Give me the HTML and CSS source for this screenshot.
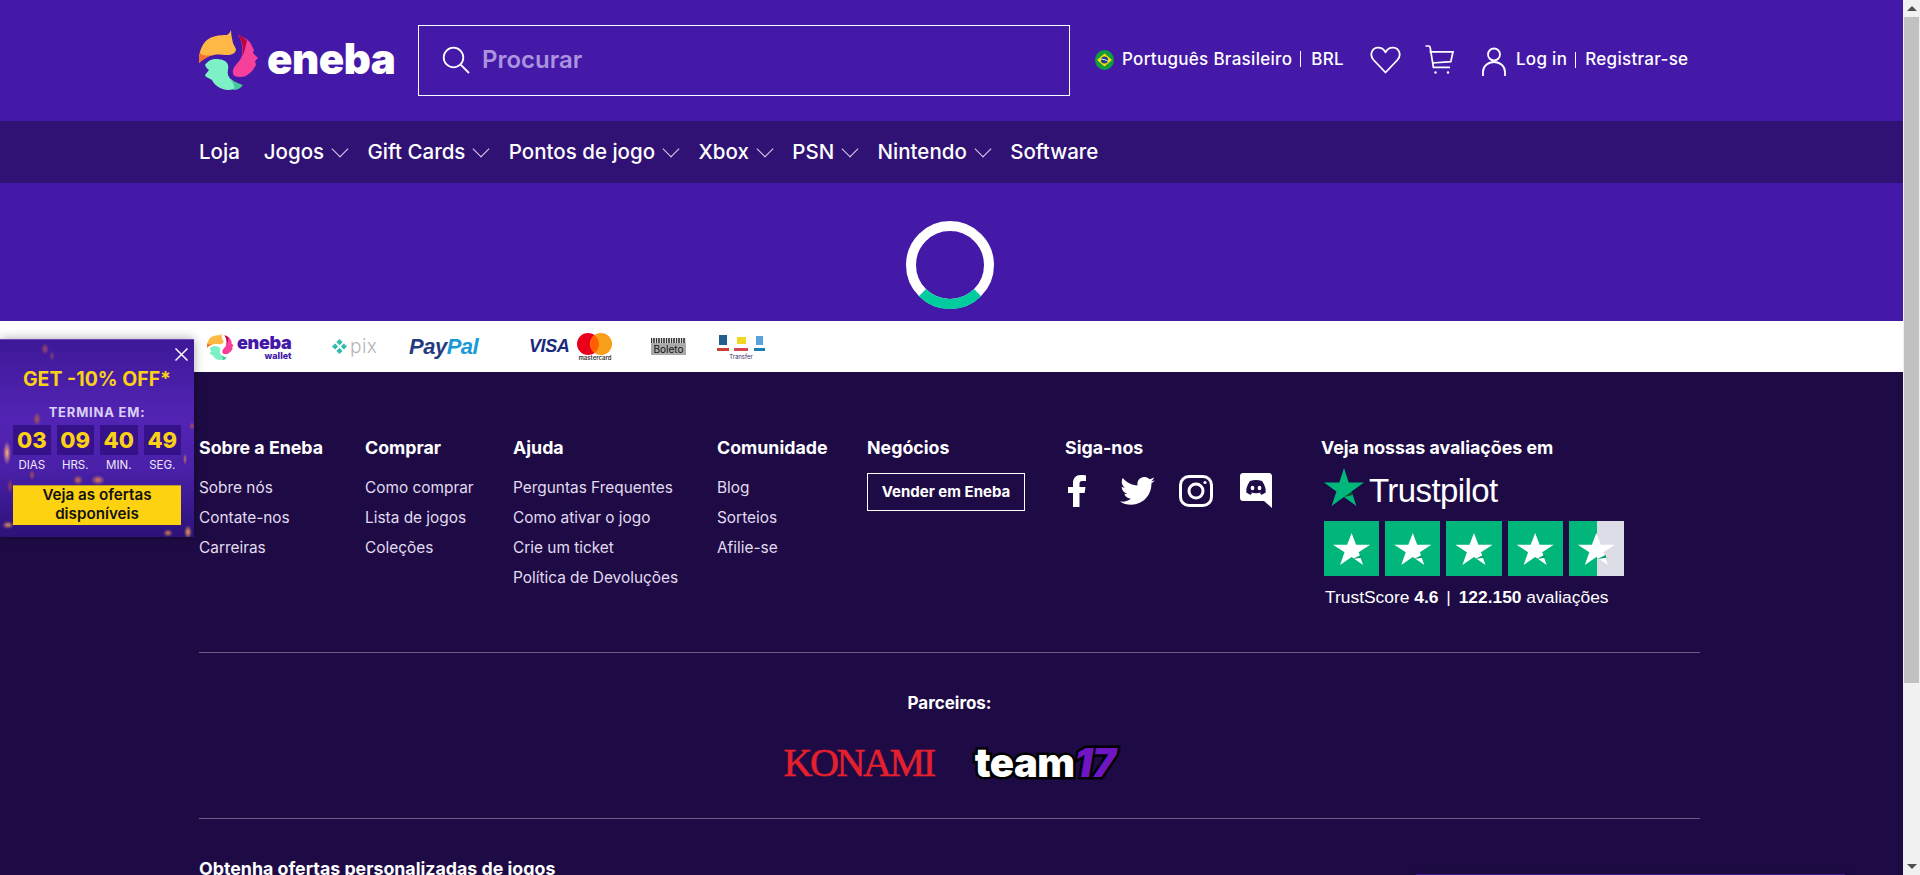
FILE: index.html
```html
<!doctype html>
<html>
  <head>
    <meta charset="utf-8" />
    <title>Eneba</title>
    <link rel="stylesheet" href="styles.css">
  </head>
  <body>
    <svg class="defs" width="0" height="0">
      <symbol id="birds" viewBox="0 0 60 60">
        <path fill="#ffb845" d="M32 0C32 4 33 9 34 13C35 16 37 18 37 20C36 24 32 25 28 25C23 25 19 24 15 25C9 26 4 29 0 33C-1 26 2 15 8 10C13 6 20 5 28 5C30 4 31 2 32 0Z"/>
        <path fill="#f5722e" d="M0 33C-1 30 0 26 1 23C3 26 9 26 15 25C9 26 4 29 0 33Z"/>
        <path fill="#f7409a" d="M39 5C45 7 50 10 52 14L55 20L54 23L59 28L56 31L57 35L54 40C50 44 47 47 42 47C37 47 34 46 34 43C33 38 38 34 41 30C45 24 44 12 39 5Z"/>
        <path fill="#b5063f" d="M39 5C43 6 46 8 48 11C46 17 46 22 43 27C45 20 44 12 39 5Z"/>
        <path fill="#7df0c5" d="M6 35C9 31 12 29 17 29C23 29 28 31 29 35C30 38 28 41 29 45C31 50 36 53 41 55C38 59 33 60 28 60C21 59 15 55 13 50C10 48 6 47 6 45L10 40C8 39 7 37 6 35Z"/>
        <path fill="#43c99a" d="M29 45C31 50 38 53 44 55C41 59 38 60 34 60C38 57 32 50 29 45Z"/>
      </symbol>
    </svg>

    <div class="app">
      <div class="page">
        <header class="topbar">
          <a class="logo">
            <svg class="logo-mark" width="60" height="60"><use href="#birds" /></svg>
            <span class="logo-text">eneba</span>
          </a>
          <div class="search">
            <svg class="search-icon" width="28" height="28" viewBox="0 0 28 28" fill="none" stroke="#fff" stroke-width="1.8">
              <circle cx="11.5" cy="11.5" r="9.8" />
              <path d="M18.6 18.6L27 27" />
            </svg>
            <span class="search-text">Procurar</span>
          </div>
          <div class="locale">
            <svg width="19" height="20" viewBox="0 0 19 20">
              <ellipse cx="9.5" cy="10" rx="9.5" ry="10" fill="#0f9d3e" />
              <path d="M9.5 3.5L17 10L9.5 16.5L2 10Z" fill="#fedd00" />
              <circle cx="9.5" cy="10" r="3.6" fill="#1c3f94" />
              <path d="M6 9.2C8 9 11 9.8 13 11.4" stroke="#fff" fill="none" />
            </svg>
            <span class="locale-name">Português Brasileiro</span>
            <i class="sep"></i>
            <span>BRL</span>
          </div>
          <svg class="icon-heart" width="31" height="28" viewBox="0 0 31 28" fill="none" stroke="#fff" stroke-width="1.8" stroke-linejoin="round">
            <path d="M15.5 26.5L3.6 14C-0.6 9.6 1.4 2 7.6 1.6C11 1.4 14 3.4 15.5 6.4C17 3.4 20 1.4 23.4 1.6C29.6 2 31.6 9.6 27.4 14Z" />
          </svg>
          <svg class="icon-cart" width="29" height="30" viewBox="0 0 29 30" fill="none" stroke="#fff" stroke-width="1.7">
            <path d="M0.5 1H3.5C4.6 1 5 1.6 5.2 2.6L8.4 22.4H25" />
            <path d="M4.6 6.8H28L25.8 16.6L7.2 18" />
            <circle cx="10.5" cy="27.5" r="1.2" fill="#fff" stroke="none" />
            <circle cx="23" cy="27.5" r="1.2" fill="#fff" stroke="none" />
          </svg>
          <svg class="icon-user" width="24" height="29" viewBox="0 0 24 29" fill="none" stroke="#fff" stroke-width="1.8">
            <circle cx="12" cy="7.5" r="6" />
            <path d="M1 29V25C1 19 6 15 12 15C18 15 23 19 23 25V29" />
          </svg>
          <div class="auth">
            <span>Log in</span>
            <i class="sep"></i>
            <span>Registrar-se</span>
          </div>
        </header>

        <nav class="menu">
          <a>Loja</a>
          <a class="has-sub">Jogos</a>
          <a class="has-sub">Gift Cards</a>
          <a class="has-sub">Pontos de jogo</a>
          <a class="has-sub">Xbox</a>
          <a class="has-sub">PSN</a>
          <a class="has-sub">Nintendo</a>
          <a>Software</a>
        </nav>

        <div class="loading">
          <svg width="88" height="88" viewBox="0 0 88 88" fill="none" stroke-width="10">
            <circle cx="44" cy="44" r="39" stroke="#fff" />
            <path d="M16.4 71.6A39 39 0 0 0 71.6 71.6" stroke="#00cc9f" />
          </svg>
        </div>

        <div class="payments">
          <div class="pay pay-wallet">
            <svg width="27" height="27"><use href="#birds" /></svg>
            <div class="wallet-text"><b>eneba</b><small>wallet</small></div>
          </div>
          <div class="pay pay-pix">
            <svg width="15" height="15" viewBox="0 0 15 15" fill="#32bcad">
              <path d="M7.5 0L10.6 3.1L7.5 6.2L4.4 3.1Z" />
              <path d="M3.1 4.4L6.2 7.5L3.1 10.6L0 7.5Z" />
              <path d="M11.9 4.4L15 7.5L11.9 10.6L8.8 7.5Z" />
              <path d="M7.5 8.8L10.6 11.9L7.5 15L4.4 11.9Z" />
            </svg>
            <span>pix</span>
          </div>
          <div class="pay pay-paypal"><b>Pay</b><b>Pal</b></div>
          <div class="pay pay-card">
            <b class="visa">VISA</b>
            <div class="mc">
              <svg width="35" height="22" viewBox="0 0 35 22">
                <circle cx="11" cy="11" r="11" fill="#eb001b" />
                <circle cx="24" cy="11" r="11" fill="#f79e1b" />
                <path d="M17.5 2.2A11 11 0 0 1 17.5 19.8A11 11 0 0 1 17.5 2.2Z" fill="#ff5f00" />
              </svg>
              <small>mastercard</small>
            </div>
          </div>
          <div class="pay pay-boleto"><span>Boleto</span></div>
          <div class="pay pay-transfer">
            <div class="banks">
              <i class="bank-a"></i><i class="bank-b"></i><i class="bank-c"></i>
              <i class="bank-d"></i><i class="bank-e"></i><i class="bank-f"></i>
            </div>
            <small>Transfer</small>
          </div>
        </div>

        <footer class="footer">
          <div class="columns">
            <div class="col">
              <h4>Sobre a Eneba</h4>
              <a>Sobre nós</a>
              <a>Contate-nos</a>
              <a>Carreiras</a>
            </div>
            <div class="col">
              <h4>Comprar</h4>
              <a>Como comprar</a>
              <a>Lista de jogos</a>
              <a>Coleções</a>
            </div>
            <div class="col">
              <h4>Ajuda</h4>
              <a>Perguntas Frequentes</a>
              <a>Como ativar o jogo</a>
              <a>Crie um ticket</a>
              <a>Política de Devoluções</a>
            </div>
            <div class="col">
              <h4>Comunidade</h4>
              <a>Blog</a>
              <a>Sorteios</a>
              <a>Afilie-se</a>
            </div>
            <div class="col">
              <h4>Negócios</h4>
              <a class="sell">Vender em Eneba</a>
            </div>
            <div class="col">
              <h4>Siga-nos</h4>
              <div class="social">
                <svg width="18" height="32" viewBox="0 0 18 32" fill="#fff">
                  <path d="M5 32V18H0V12H5V8C5 3 8 0 12.5 0C15 0 17 .2 18 .4V6H14.5C12 6 11.5 7 11.5 9V12H17.5L16.6 18H11.5V32Z" />
                </svg>
                <svg width="35" height="28" viewBox="0 0 35 28" fill="#fff">
                  <path d="M35 3.3C33.7 3.9 32.3 4.3 30.9 4.5C32.4 3.6 33.5 2.2 34 .5C32.6 1.3 31.1 1.9 29.5 2.2C26.7 -.8 22.1 -.7 19.4 2.1C17.7 3.8 17 6.3 17.5 8.6C11.7 8.3 6.4 5.6 2.7 1.1C.8 4.4 1.8 8.5 4.9 10.6C3.8 10.6 2.7 10.3 1.7 9.7C1.7 13.1 4.1 16 7.4 16.7C6.4 17 5.3 17 4.2 16.8C5.2 19.7 7.8 21.7 10.9 21.8C8.3 23.8 4.9 24.9 1.6 24.6L0 24.5C3.3 26.6 7.1 27.7 11 27.7C24.2 27.7 31.4 16.8 31.4 7.3V6.4C32.8 5.4 34 4.4 35 3.3Z" />
                </svg>
                <svg width="34" height="32" viewBox="0 0 34 32" fill="none" stroke="#fff" stroke-width="3">
                  <rect x="1.5" y="1.5" width="31" height="29" rx="8.5" />
                  <circle cx="17" cy="16" r="7" />
                  <circle cx="26" cy="7.5" r="1.6" fill="#fff" stroke="none" />
                </svg>
                <svg width="32" height="35" viewBox="0 0 32 35">
                  <path fill="#fff" d="M3 0H29C30.7 0 32 1.3 32 3V35L24 28H3C1.3 28 0 26.7 0 25V3C0 1.3 1.3 0 3 0Z" />
                  <path fill="#1e0b45" d="M10 8C12 7.2 14 7 16 7C18 7 20 7.2 22 8C24.5 11.5 26 15 25.7 19.5C24 20.8 22.4 21.4 21 21.7L20 20C20.5 19.8 21 19.5 21.4 19.2C18 20.7 14 20.7 10.6 19.2C11 19.5 11.5 19.8 12 20L11 21.7C9.6 21.4 8 20.8 6.3 19.5C6 15 7.5 11.5 10 8Z" />
                  <ellipse cx="12.5" cy="15" rx="1.9" ry="2.2" fill="#fff" />
                  <ellipse cx="19.5" cy="15" rx="1.9" ry="2.2" fill="#fff" />
                </svg>
              </div>
            </div>
            <div class="col">
              <h4>Veja nossas avaliações em</h4>
              <div class="tp-brand">
                <svg width="40" height="38" viewBox="0 0 40 38">
                  <path fill="#00b67a" d="M20 0L24.7 14.5H40L27.6 23.5L32.4 38L20 29L7.6 38L12.4 23.5L0 14.5H15.3Z" />
                  <path fill="#005128" d="M27.6 23.5L28.7 27L20 29Z" />
                </svg>
                <span>Trustpilot</span>
              </div>
              <div class="tp-stars">
                <i class="tp-star"></i><i class="tp-star"></i><i class="tp-star"></i><i class="tp-star"></i><i class="tp-star half"></i>
              </div>
              <div class="tp-score">TrustScore <b>4.6</b> <em>|</em> <b>122.150</b> avaliações</div>
            </div>
          </div>

          <hr class="rule" />

          <div class="partners">
            <h4>Parceiros:</h4>
            <div class="partner-logos">
              <span class="konami">KONAMI</span>
              <span class="team17">team<b>17</b></span>
            </div>
          </div>

          <hr class="rule" />

          <h4 class="offers">Obtenha ofertas personalizadas de jogos</h4>
        </footer>
      </div>

      <div class="scrollbar">
        <i class="arrow-up"></i>
        <div class="thumb"></div>
        <i class="arrow-down"></i>
      </div>
    </div>

    <aside class="promo">
      <svg class="promo-close" width="13" height="13" viewBox="0 0 13 13" stroke="#fff" stroke-width="1.5">
        <path d="M.5 .5L12.5 12.5M12.5 .5L.5 12.5" />
      </svg>
      <div class="promo-title">GET -10% OFF*</div>
      <div class="promo-ends">TERMINA EM:</div>
      <div class="timer">
        <div class="cell"><b>03</b><span>DIAS</span></div>
        <div class="cell"><b>09</b><span>HRS.</span></div>
        <div class="cell"><b>40</b><span>MIN.</span></div>
        <div class="cell"><b>49</b><span>SEG.</span></div>
      </div>
      <a class="promo-btn">Veja as ofertas disponíveis</a>
    </aside>

    <div class="bottom-edge"></div>
  </body>
</html>
```

FILE: styles.css
```css
* {
  margin: 0;
  padding: 0;
  box-sizing: border-box;
}
html,
body {
  height: 875px;
  overflow: hidden;
  background: #1e0b45;
  color: #fff;
  font-family: Inter, "Noto Sans", sans-serif;
}
.defs {
  position: absolute;
}
.app {
  display: flex;
  height: 875px;
}
.page {
  flex: 1;
  min-width: 0;
  overflow: hidden;
}

/* top bar */
.topbar {
  height: 121px;
  background: #4519a8;
  display: flex;
  align-items: center;
  padding-left: 199px;
}
.logo {
  width: 219px;
  display: flex;
  align-items: center;
  gap: 8px;
  margin-top: -1px;
}
.logo-mark {
  overflow: visible;
}
.logo-text {
  font-size: 42px;
  font-weight: 900;
  letter-spacing: -0.5px;
  line-height: 1;
  margin-top: -2px;
}
.search {
  width: 652px;
  height: 71px;
  border: 1px solid #fff;
  display: flex;
  align-items: center;
  padding-left: 23px;
  gap: 12px;
}
.search-icon {
  margin-top: -1px;
}
.search-text {
  font-size: 24px;
  font-weight: 600;
  color: #a994dd;
  margin-top: -3px;
}
.locale {
  display: flex;
  align-items: center;
  margin-left: 25px;
  margin-top: -1px;
  font-size: 17px;
  font-weight: 500;
  letter-spacing: 0.3px;
}
.locale span,
.auth span {
  margin-top: -3px;
}
.locale-name {
  margin-left: 8px;
}
.sep {
  width: 1px;
  height: 16px;
  background: #fff;
  margin: -2px 9px 0 8px;
}
.locale .sep {
  margin-right: 10px;
}
.icon-heart {
  margin-left: 26px;
  margin-top: -2px;
}
.icon-cart {
  margin-left: 24px;
  margin-top: -2px;
}
.icon-user {
  margin-left: 28px;
  margin-top: 1px;
}
.auth {
  display: flex;
  align-items: center;
  margin-left: 10px;
  font-size: 17px;
  font-weight: 500;
  letter-spacing: 0.3px;
}

/* menu */
.menu {
  height: 62px;
  background: #2f1273;
  display: flex;
  align-items: center;
  padding: 0 0 2px 199px;
  gap: 24px;
  font-size: 20.5px;
  font-weight: 500;
}
.has-sub {
  display: flex;
  align-items: center;
  gap: 7px;
  margin-right: -5.6px;
}
.has-sub::after {
  content: "";
  width: 11px;
  height: 11px;
  margin: -4px 3px 0 3px;
  border-right: 1px solid #d9d0f0;
  border-bottom: 1px solid #d9d0f0;
  transform: rotate(45deg);
}

/* spinner */
.loading {
  height: 138px;
  background: #4519a8;
  display: flex;
  align-items: center;
  justify-content: center;
  padding: 25px 3px 0 0;
}

/* payment strip */
.payments {
  height: 51px;
  background: #fff;
  display: flex;
  align-items: center;
  padding-left: 207px;
}
.pay {
  display: flex;
  align-items: center;
  flex: none;
}
.pay-wallet {
  width: 125px;
  gap: 3px;
}
.wallet-text {
  display: flex;
  flex-direction: column;
  align-items: flex-end;
  color: #4519a8;
  line-height: 1;
}
.wallet-text b {
  font-size: 18px;
  font-weight: 900;
  letter-spacing: -0.3px;
}
.wallet-text small {
  font-size: 9px;
  font-weight: 800;
  margin-top: -1px;
}
.pay-pix {
  width: 77px;
  gap: 3px;
  color: #b5b5b5;
  font-size: 19px;
  font-weight: 300;
  letter-spacing: 0.5px;
}
.pay-paypal {
  width: 120px;
  font-family: "Liberation Sans", sans-serif;
  font-size: 22px;
  font-style: italic;
  letter-spacing: -0.5px;
}
.pay-paypal b:first-child {
  color: #253b80;
}
.pay-paypal b:last-child {
  color: #179bd7;
}
.pay-card {
  width: 122px;
  gap: 8px;
}
.visa {
  font-family: "Liberation Sans", sans-serif;
  font-size: 18px;
  font-style: italic;
  letter-spacing: -0.4px;
  color: #1a2a7a;
}
.mc {
  display: flex;
  flex-direction: column;
  align-items: center;
  line-height: 1;
}
.mc small {
  font-size: 6px;
  font-weight: 600;
  color: #333;
}
.pay-boleto {
  width: 35px;
  height: 17px;
  background: repeating-linear-gradient(90deg, #333 0 1px, #ccc 1px 2px, #555 2px 4px, #ddd 4px 5px);
  font-size: 10px;
  color: #111;
  align-items: flex-end;
  margin-right: 29px;
  line-height: 12px;
}
.pay-boleto span {
  background: #aaa;
  width: 100%;
  text-align: center;
}
.pay-transfer {
  flex-direction: column;
  width: 52px;
  margin-top: 2px;
}
.banks {
  display: grid;
  grid-template-columns: repeat(3, 1fr);
  gap: 3px 4px;
  width: 50px;
  justify-items: center;
  align-items: center;
}
.bank-a { background: #1f5f8b; width: 8px; height: 10px; }
.bank-b { background: #f0d820; width: 9px; height: 7px; }
.bank-c { background: #5aa0dc; width: 7px; height: 9px; }
.bank-d { background: #c9402f; width: 12px; height: 3px; }
.bank-e { background: #d8434f; width: 14px; height: 3px; }
.bank-f { background: #1a7fb0; width: 11px; height: 3px; }
.pay-transfer small {
  font-size: 6px;
  color: #3a2f6e;
  margin-top: 3px;
  line-height: 1;
}

/* footer */
.footer {
  background: #1e0b45;
  padding: 66px 0 0 199px;
  width: 1700px;
}
h4 {
  font-size: 17.8px;
  font-weight: 700;
  line-height: 20px;
}
.columns {
  display: grid;
  grid-template-columns: 166px 148px 204px 150px 198px 256px 1fr;
  height: 214px;
}
.col a {
  display: block;
  font-size: 15.4px;
  line-height: 30px;
  color: #e2dcf0;
  white-space: nowrap;
}
.col h4 {
  margin-bottom: 15px;
  white-space: nowrap;
}
.col a.sell {
  width: 158px;
  height: 38px;
  margin-top: 1px;
  border: 1px solid #fff;
  color: #fff;
  font-size: 15px;
  font-weight: 700;
  line-height: 36px;
  text-align: center;
}
.social {
  display: flex;
  align-items: flex-start;
  padding-left: 3px;
}
.social svg:nth-child(1) {
  margin-top: 2px;
}
.social svg:nth-child(2) {
  margin: 4px 0 0 34px;
}
.social svg:nth-child(3) {
  margin: 2px 0 0 24px;
}
.social svg:nth-child(4) {
  margin-left: 27px;
}
.tp-brand {
  display: flex;
  align-items: center;
  gap: 5px;
  margin: -5px 0 0 3px;
  height: 38px;
}
.tp-brand span {
  font-family: "Liberation Sans", sans-serif;
  font-size: 33px;
  letter-spacing: -0.6px;
  margin-top: 7px;
}
.tp-stars {
  display: flex;
  gap: 6px;
  margin: 15px 0 0 3px;
}
.tp-star {
  position: relative;
  width: 55.2px;
  height: 55px;
  background: #00b67a;
}
.tp-star.half {
  background: linear-gradient(90deg, #00b67a 51%, #dcdce6 51%);
}
.tp-star::after {
  content: "";
  position: absolute;
  inset: 12px 9px 11px;
  background: #fff;
  clip-path: polygon(50% 0, 62% 37%, 100% 37%, 69% 60%, 81% 100%, 50% 75%, 19% 100%, 31% 60%, 0 37%, 38% 37%);
}
.tp-star::before {
  content: "";
  position: absolute;
  inset: 0;
  z-index: 1;
  background: #00a06b;
  clip-path: polygon(52% 69%, 67% 62%, 68% 67%);
}
.tp-score {
  font-family: "Liberation Sans", sans-serif;
  font-size: 17.4px;
  margin: 11px 0 0 4px;
  white-space: nowrap;
}
.tp-score em {
  font-style: normal;
  margin: 0 3px;
}
.rule {
  border: 0;
  border-top: 1px solid #6b5c85;
  margin: 0;
}
.partners {
  height: 165px;
  padding-top: 40px;
  text-align: center;
}
.partners h4 {
  font-size: 17px;
}
.partner-logos {
  display: flex;
  justify-content: center;
  align-items: center;
  gap: 41px;
  margin-top: 30px;
}
.konami {
  font-family: "Liberation Serif", serif;
  font-size: 40px;
  line-height: 30px;
  color: #e5202e;
  letter-spacing: -2.4px;
  -webkit-text-stroke: 0.6px #e5202e;
}
.team17 {
  font-size: 40px;
  font-weight: 900;
  line-height: 40px;
  letter-spacing: -0.5px;
  color: #fff;
  -webkit-text-stroke: 5px #000;
  paint-order: stroke fill;
}
.team17 b {
  color: #7015c4;
  font-style: italic;
}
.offers {
  margin-top: 40px;
}

/* fake scrollbar */
.scrollbar {
  width: 17px;
  flex: none;
  background: #f1f1f1;
  display: flex;
  flex-direction: column;
  align-items: center;
  justify-content: space-between;
}
.thumb {
  width: 15px;
  height: 666px;
  margin-bottom: auto;
  background: #c1c1c1;
}
.arrow-up,
.arrow-down {
  width: 0;
  height: 0;
  border-left: 5px solid transparent;
  border-right: 5px solid transparent;
}
.arrow-up {
  border-bottom: 5px solid #505050;
  margin: 6px 0;
}
.arrow-down {
  border-top: 5px solid #505050;
  margin: 6px 0;
}

/* promo popup */
.promo {
  position: absolute;
  left: 0;
  top: 339px;
  width: 194px;
  height: 198px;
  padding-top: 29px;
  text-align: center;
  box-shadow: 0 0 10px rgba(0, 0, 0, 0.35);
  border-top: 1px solid #6a46b8;
  background:
    radial-gradient(ellipse 4px 12px at 7px 113px, #ffb07a, transparent),
    radial-gradient(ellipse 4px 7px at 37px 79px, #a8584f, transparent),
    radial-gradient(ellipse 4px 6px at 45px 9px, #a04a6a, transparent),
    radial-gradient(ellipse 3px 5px at 52px 16px, #80407a, transparent),
    radial-gradient(ellipse 5px 5px at 78px 140px, #c96a55, transparent),
    radial-gradient(ellipse 7px 5px at 98px 140px, #d8805a, transparent),
    radial-gradient(ellipse 3px 5px at 32px 135px, #a8504f, transparent),
    radial-gradient(ellipse 3px 8px at 10px 146px, #90405f, transparent),
    radial-gradient(ellipse 6px 4px at 8px 185px, #d88a5f, transparent),
    radial-gradient(ellipse 4px 7px at 188px 192px, #f09a4f, transparent),
    radial-gradient(ellipse 5px 4px at 168px 193px, #d07a4f, transparent),
    radial-gradient(ellipse 2px 6px at 185px 119px, #c0705f, transparent),
    radial-gradient(ellipse 3px 4px at 192px 86px, #a8504f, transparent),
    linear-gradient(180deg, #3d1898 0%, #5324b4 40%, #4a20a8 65%, #2c1278 100%);
}
.promo-close {
  position: absolute;
  top: 8px;
  right: 6px;
}
.promo-title {
  font-size: 19.5px;
  font-weight: 700;
  line-height: 20px;
  color: #fbd116;
}
.promo-ends {
  margin-top: 16px;
  font-size: 13px;
  font-weight: 700;
  line-height: 14px;
  letter-spacing: 0.8px;
  color: #dcd0f5;
}
.timer {
  display: flex;
  gap: 6px;
  margin: 6px 13px 0;
}
.cell {
  flex: 1;
  display: flex;
  flex-direction: column;
}
.cell b {
  height: 30px;
  background: #35128a;
  color: #fbd116;
  font-size: 22px;
  font-weight: 800;
  line-height: 30px;
}
.cell span {
  margin-top: 3px;
  font-size: 11.5px;
  line-height: 14px;
  color: #eee9f9;
}
.promo-btn {
  display: block;
  margin: 13px 13px 0;
  height: 40px;
  padding: 0 8px;
  background: #fdd211;
  border-top: 1px solid #b69a2e;
  color: #111;
  font-size: 15.2px;
  font-weight: 600;
  line-height: 18.5px;
}

/* edge of the sticky bar below the fold */
.bottom-edge {
  position: absolute;
  left: 1416px;
  top: 874px;
  width: 429px;
  height: 1px;
  background: #3a1690;
  box-shadow: 0 -2px 8px rgba(0, 0, 0, 0.5);
}
```
